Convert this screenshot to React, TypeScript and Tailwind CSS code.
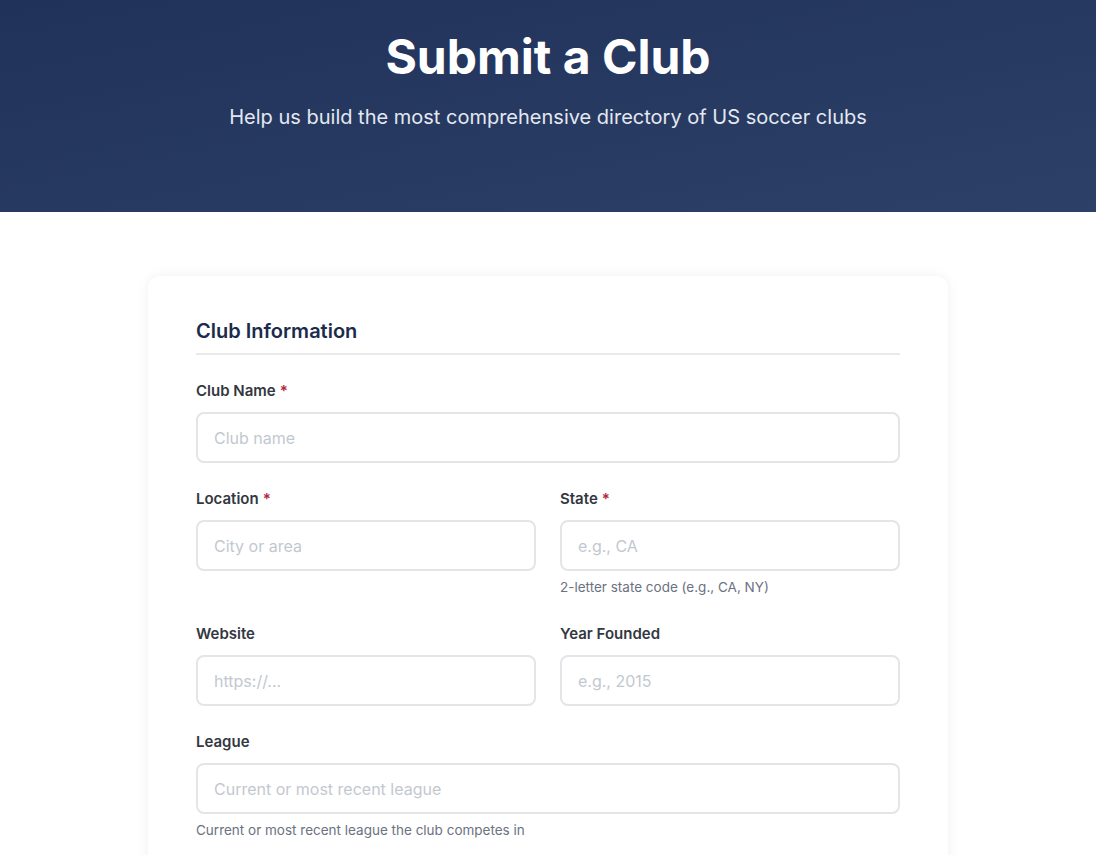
import React from 'react';

interface FieldProps {
  label: string;
  placeholder: string;
  required?: boolean;
  help?: string;
}

const Field: React.FC<FieldProps> = ({ label, placeholder, required, help }) => (
  <div className="mb-[25px]">
    <label className="block text-[15px] leading-[22px] font-semibold text-[#333741] mb-[10px]">
      {label}
      {required && <span className="text-[#b4233a] ml-1">*</span>}
    </label>
    <input
      type="text"
      placeholder={placeholder}
      className="block h-[51px] w-full rounded-lg border-2 border-[#e3e5e9] bg-white px-4 text-base text-gray-800 placeholder:text-[#c3c8d0] outline-none"
    />
    {help && <p className="mt-[6px] text-[13.5px] leading-[21px] text-[#6b7280]">{help}</p>}
  </div>
);

export default function App() {
  return (
    <div className="min-h-screen bg-white" style={{ fontFamily: 'Inter, "Noto Sans", sans-serif' }}>
      <header className="h-[212px] bg-gradient-to-br from-[#20325a] to-[#2d4068] pt-[33px] text-center">
        <h1 className="text-5xl leading-none font-bold text-white">Submit a Club</h1>
        <p className="mt-[22px] text-xl leading-7 text-[#e3e8f1]">
          Help us build the most comprehensive directory of US soccer clubs
        </p>
      </header>

      <main className="mx-auto mt-16 max-w-[800px] rounded-xl bg-white px-12 pt-[41px] pb-8 shadow-[0_0_14px_rgba(0,0,0,0.06)]">
        <h2 className="border-b-2 border-[#e8eaee] pb-[8px] text-xl leading-7 font-semibold text-[#1c2b4b] mb-[25px]">
          Club Information
        </h2>

        <Field label="Club Name" placeholder="Club name" required />

        <div className="grid grid-cols-2 gap-x-6">
          <Field label="Location" placeholder="City or area" required />
          <Field label="State" placeholder="e.g., CA" required help="2-letter state code (e.g., CA, NY)" />
          <Field label="Website" placeholder="https://..." />
          <Field label="Year Founded" placeholder="e.g., 2015" />
        </div>

        <Field
          label="League"
          placeholder="Current or most recent league"
          help="Current or most recent league the club competes in"
        />
      </main>
    </div>
  );
}
